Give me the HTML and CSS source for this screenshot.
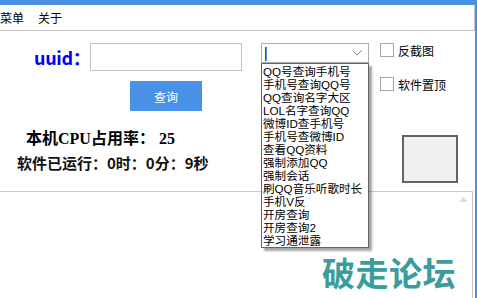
FILE: index.html
```html
<!DOCTYPE html>
<html lang="zh-CN">
<head>
    <meta charset="UTF-8">
    <title>工具</title>
    <link rel="stylesheet" href="styles.css">
</head>
<body>
    <div class="window">
        <div class="titlebar"></div>
        <div class="menubar">
            <span class="menu-item">菜单</span>
            <span class="menu-item">关于</span>
        </div>

        <div class="main">
            <div class="col-left">
                <div class="uuid-row">
                    <label class="uuid-label">uuid：</label>
                    <input class="uuid-input" type="text">
                </div>
                <button class="query-btn">查询</button>
                <div class="cpu">本机CPU占用率： 25</div>
                <div class="runtime">软件已运行：0时：0分：9秒</div>
            </div>

            <div class="col-combo">
                <div class="combo">
                    <span class="caret">|</span>
                    <svg class="chevron" width="10" height="6" viewBox="0 0 10 6">
                        <polyline points="0.5,0.5 5,5 9.5,0.5" fill="none" stroke="#7a7a7a" stroke-width="1"/>
                    </svg>
                </div>
                <ul class="dropdown">
                    <li>QQ号查询手机号</li>
                    <li>手机号查询QQ号</li>
                    <li>QQ查询名字大区</li>
                    <li>LOL名字查询QQ</li>
                    <li>微博ID查手机号</li>
                    <li>手机号查微博ID</li>
                    <li>查看QQ资料</li>
                    <li>强制添加QQ</li>
                    <li>强制会话</li>
                    <li>刷QQ音乐听歌时长</li>
                    <li>手机V反</li>
                    <li>开房查询</li>
                    <li>开房查询2</li>
                    <li>学习通泄露</li>
                </ul>
            </div>

            <div class="col-right">
                <div class="check-row"><span class="checkbox"></span>反截图</div>
                <div class="check-row second"><span class="checkbox"></span>软件置顶</div>
                <div class="grey-box"></div>
            </div>
        </div>

        <div class="log">
            <svg class="scroll-up" width="9" height="5" viewBox="0 0 9 5">
                <polygon points="0,5 4.5,0 9,5" fill="#dcdcdc"/>
            </svg>
            <div class="watermark">破走论坛</div>
        </div>
    </div>
</body>
</html>
```

FILE: styles.css
```css
/* Page */
body {
    margin: 0;
    font-family: "Noto Sans CJK SC", sans-serif;
    background: #fff;
}

.window {
    width: 475px;
    height: 298px;
    border-right: 2px solid #4a90e2;
    display: flex;
    flex-direction: column;
    overflow: hidden;
}

.titlebar {
    height: 5px;
    background: #4a90e2;
}

/* Menu bar */
.menubar {
    height: 25px;
    border-bottom: 1px solid #c8c8c8;
    border-right: 1px solid #c8c8c8;
    display: flex;
    align-items: center;
    gap: 14px;
    font-size: 12px;
    color: #000;
}

.menu-item {
    line-height: 14px;
}

/* Main form area */
.main {
    height: 160px;
    display: flex;
    position: relative;
}

.col-left {
    width: 250px;
    padding-top: 12px;
}

.uuid-row {
    display: flex;
    align-items: center;
}

.uuid-label {
    width: 56px;
    margin-left: 34px;
    font-family: "Noto Sans CJK SC", sans-serif;
    font-weight: bold;
    font-size: 18px;
    letter-spacing: -0.3px;
    color: #0000ff;
    line-height: 28px;
}

.uuid-input {
    box-sizing: border-box;
    width: 152px;
    height: 28px;
    margin: 0;
    border: 1px solid #c3c3c3;
    outline: none;
}

.query-btn {
    display: block;
    width: 72px;
    height: 30px;
    margin: 10px 0 0 130px;
    padding: 0;
    border: none;
    background: #4991e6;
    color: #fff;
    font-family: "Noto Sans CJK SC", sans-serif;
    font-size: 12px;
}

.cpu {
    margin: 18px 0 0 26px;
    font-family: "Liberation Serif", "Noto Sans CJK SC", serif;
    font-weight: bold;
    font-size: 16px;
    line-height: 20px;
}

.runtime {
    margin: 4px 0 0 17px;
    font-weight: bold;
    font-size: 15px;
    line-height: 20px;
    color: #111;
}

/* Combo box */
.col-combo {
    width: 108px;
    margin-left: 11px;
    padding-top: 12px;
    position: relative;
}

.combo {
    box-sizing: border-box;
    height: 20px;
    border: 1px solid #adadad;
    background: #fff;
    display: flex;
    align-items: center;
    justify-content: space-between;
    padding: 0 6px 0 2px;
}

.caret {
    font-family: "Liberation Sans", sans-serif;
    font-size: 14px;
    line-height: 14px;
}

.dropdown {
    position: absolute;
    top: 32px;
    left: 0;
    width: 108px;
    box-sizing: border-box;
    margin: 0;
    padding: 1px 0 0 1px;
    list-style: none;
    background: #fff;
    border: 1px solid #646464;
    box-shadow: 3px 3px 2px rgba(0, 0, 0, 0.35);
    z-index: 2;
}

.dropdown li {
    font-family: "Liberation Sans", "Noto Sans CJK SC", sans-serif;
    font-size: 11.6px;
    line-height: 13px;
    height: 13px;
    white-space: nowrap;
    color: #000;
}

/* Check boxes and grey panel */
.col-right {
    margin-left: 11px;
    padding-top: 12px;
    font-size: 12px;
}

.check-row {
    display: flex;
    align-items: center;
    gap: 4px;
    height: 14px;
}

.check-row.second {
    margin-top: 20px;
}

.checkbox {
    box-sizing: border-box;
    width: 14px;
    height: 14px;
    border: 1px solid #a8a8a8;
    background: #fff;
}

.grey-box {
    box-sizing: border-box;
    width: 56px;
    height: 48px;
    margin: 44px 0 0 22px;
    background: #f0f0f0;
    border: 2px solid #646464;
}

/* Log area */
.log {
    flex: 1;
    position: relative;
    width: 473px;
    box-sizing: border-box;
    border-top: 1px solid #c8c8c8;
    border-right: 1px solid #c8c8c8;
}

.scroll-up {
    position: absolute;
    top: 5px;
    right: 4px;
}

.watermark {
    position: absolute;
    left: 322px;
    top: 60px;
    font-size: 33px;
    font-weight: bold;
    line-height: 40px;
    letter-spacing: 0.5px;
    color: #3b9c9c;
}
```
